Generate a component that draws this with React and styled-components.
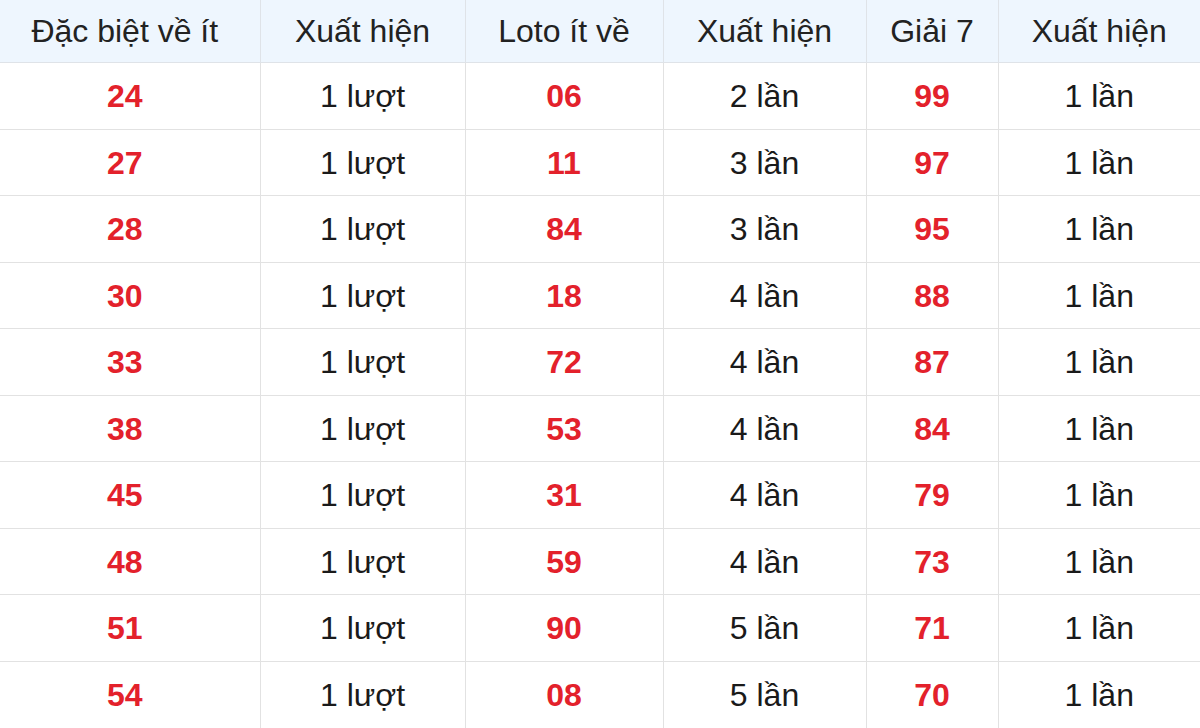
import React from "react"
import styled, { createGlobalStyle } from "styled-components"

const GlobalStyle = createGlobalStyle`
    html, body {
        margin: 0;
        padding: 0;
        background: #ffffff;
        font-family: "Liberation Sans", Arial, sans-serif;
    }
`

const Table = styled.table`
    width: 1200px;
    border-collapse: collapse;
    table-layout: fixed;
`

const HeadCell = styled.th`
    height: 62px;
    padding: 0;
    background-color: #eef6fe;
    color: #222;
    font-size: 32px;
    font-weight: 400;
    text-align: center;
    border-right: 1px solid #dfe3e8;
    border-bottom: 1px solid #dfe3e8;
    &:first-child{
        padding-right: 10px;
    }
    &:last-child{
        border-right: none;
    }
`

const Row = styled.tr`
    height: 66.5px;
    &:last-child td{
        border-bottom: none;
    }
`

const Cell = styled.td`
    padding: 2px 0 0;
    text-align: center;
    font-size: 32px;
    color: ${props => props.$red ? "#e3212b" : "#1a1a1a"};
    font-weight: ${props => props.$red ? 700 : 400};
    border-right: 1px solid #e2e2e2;
    border-bottom: 1px solid #e2e2e2;
    &:first-child{
        padding-right: 10px;
    }
    &:last-child{
        border-right: none;
    }
`

const columns = [
    { title: "Đặc biệt về ít", width: 260 },
    { title: "Xuất hiện", width: 205 },
    { title: "Loto ít về", width: 198 },
    { title: "Xuất hiện", width: 203 },
    { title: "Giải 7", width: 132 },
    { title: "Xuất hiện", width: 202 },
]

const rows = [
    ["24", "06", "2", "99"],
    ["27", "11", "3", "97"],
    ["28", "84", "3", "95"],
    ["30", "18", "4", "88"],
    ["33", "72", "4", "87"],
    ["38", "53", "4", "84"],
    ["45", "31", "4", "79"],
    ["48", "59", "4", "73"],
    ["51", "90", "5", "71"],
    ["54", "08", "5", "70"],
]

const App = () => {
    return(
        <>
            <GlobalStyle />
            <Table>
                <colgroup>
                    {columns.map((c, i) => <col key={i} style={{ width: c.width }} />)}
                </colgroup>
                <thead>
                    <tr>
                        {columns.map((c, i) => <HeadCell key={i}>{c.title}</HeadCell>)}
                    </tr>
                </thead>
                <tbody>
                    {rows.map(([db, loto, times, g7], i) => (
                        <Row key={i}>
                            <Cell $red>{db}</Cell>
                            <Cell>1 lượt</Cell>
                            <Cell $red>{loto}</Cell>
                            <Cell>{times} lần</Cell>
                            <Cell $red>{g7}</Cell>
                            <Cell>1 lần</Cell>
                        </Row>
                    ))}
                </tbody>
            </Table>
        </>
    )
}

export default App
